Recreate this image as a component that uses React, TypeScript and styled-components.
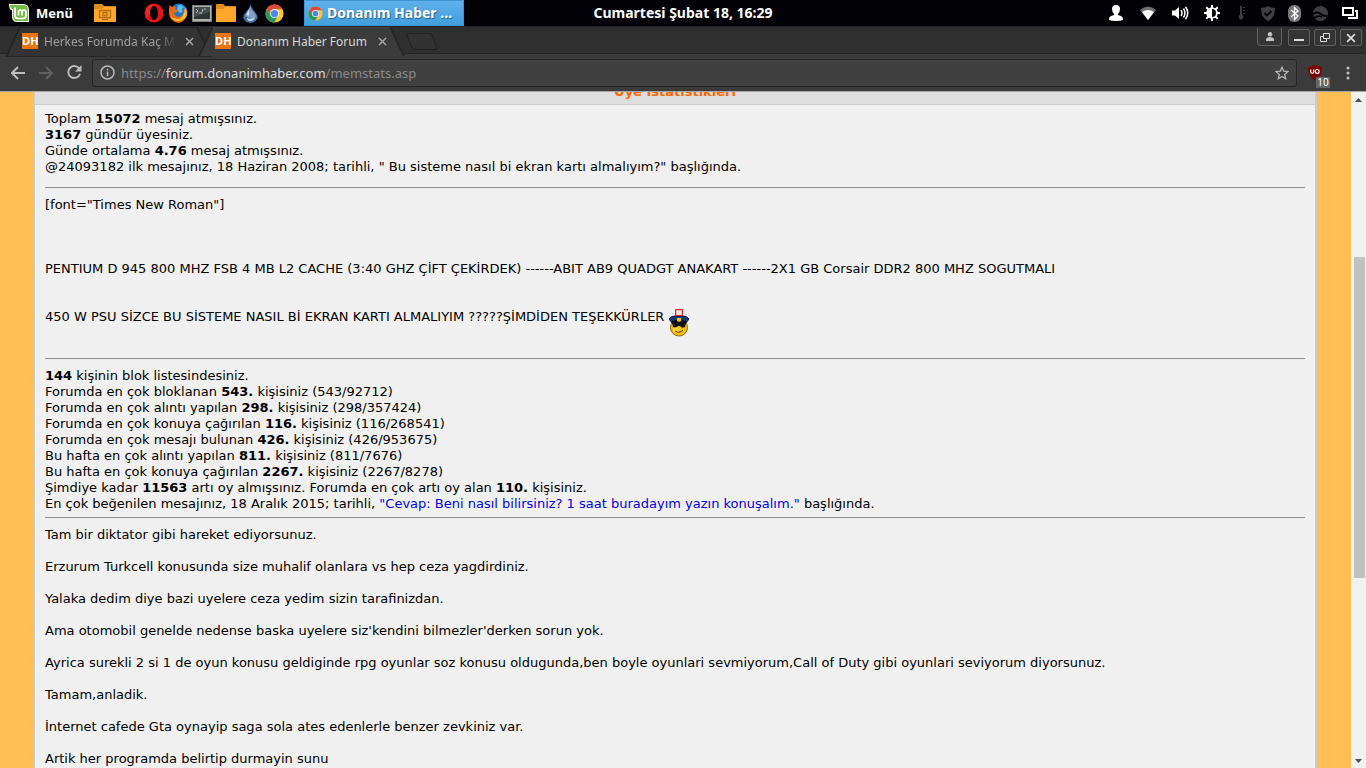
import React from "react";
import styled, { createGlobalStyle } from "styled-components";

const GlobalStyle = createGlobalStyle`
  * { box-sizing: border-box; }
  body { margin: 0; background: #f0f0f0; overflow: hidden; }
  button { padding: 0; border: 0; background: none; color: inherit; font: inherit; cursor: pointer; }
  svg { display: block; flex: none; }
`;

const Screen = styled.div`
  display: flex;
  flex-direction: column;
  height: 100vh;
  overflow: hidden;
`;

/* Desktop panel */
const Panel = styled.header`
  display: grid;
  grid-template-columns: 1fr auto 1fr;
  align-items: center;
  height: 26px;
  flex: none;
  background: #020207;
  color: #fff;
  font: bold 13px/26px "Noto Sans", sans-serif;
`;

const PanelLeft = styled.div`
  display: flex;
  align-items: center;
  height: 26px;
`;

const MenuButton = styled.button`
  display: flex;
  align-items: center;
  gap: 7px;
  width: 94px;
  padding-left: 9px;
  height: 26px;
`;

const Clock = styled.time`
  font-size: 14px;
`;

const Launchers = styled.div`
  display: flex;
  align-items: center;
  gap: 4px;
  margin-left: 30px;
`;

const Launcher = styled.button`
  display: grid;
  place-items: center;
  width: 20px;
  height: 26px;
`;

const TaskButton = styled.button`
  display: flex;
  align-items: center;
  gap: 4px;
  width: 160px;
  height: 26px;
  padding-left: 3px;
  margin-left: 20px;
  background: linear-gradient(#60b0ec, #429fdd);
  border: 1px solid #3c94d2;
  font-size: 14px;
  text-shadow: 1px 1px 1px #2a5f8c;
`;

const Tray = styled.div`
  display: flex;
  justify-content: flex-end;
  align-items: center;
  gap: 8px;
  padding-right: 5px;
`;

const TrayButton = styled.button<{ $dim?: boolean }>`
  display: grid;
  place-items: center;
  width: 22px;
  height: 26px;
  opacity: ${(p) => (p.$dim ? 0.24 : 1)};
`;

const TrayGroup = styled.div<{ $gap: number }>`
  display: flex;
  gap: ${(p) => p.$gap}px;
`;

/* Browser chrome */
const TabStrip = styled.div`
  display: flex;
  height: 28px;
  flex: none;
  padding-left: 12px;
  background: #2f2f2f;
  border-top: 1px solid #232323;
  box-shadow: inset 0 -1px #242424;
  color: #d6d6d6;
  font: 12px/27px "Noto Sans", sans-serif;
`;

const Tab = styled.div<{ $active?: boolean }>`
  position: relative;
  display: flex;
  align-items: center;
  width: 193px;
  height: 28px;
  padding: 0 9px 0 10px;
  color: ${(p) => (p.$active ? "#d8d8d8" : "#a0a0a0")};
  z-index: ${(p) => (p.$active ? 1 : 0)};
  &::before,
  &::after {
    content: "";
    position: absolute;
    z-index: -1;
    top: 0;
    height: 28px;
    width: 52%;
    background: ${(p) => (p.$active ? "#3b3b3b" : "#333333")};
    border-top: 1px solid ${(p) => (p.$active ? "#464646" : "#252525")};
    border-bottom: ${(p) => (p.$active ? "0" : "1px solid #242424")};
  }
  &::before {
    left: 0;
    border-left: 2px solid #242424;
    transform: skewX(-25deg);
  }
  &::after {
    right: 0;
    border-right: 2px solid #242424;
    transform: skewX(25deg);
  }
`;

const Favicon = styled.span`
  width: 16px;
  height: 16px;
  flex: none;
  background: #e8750f;
  color: #fff;
  font: bold 11px/16px "Open Sans", sans-serif;
  text-align: center;
`;

const TabTitle = styled.span<{ $faded?: boolean }>`
  flex: 1;
  margin-left: 6px;
  overflow: hidden;
  white-space: nowrap;
  mask-image: ${(p) => (p.$faded ? "linear-gradient(to right, #000 85%, transparent)" : "none")};
`;

const TabClose = styled.button`
  display: grid;
  place-items: center;
  width: 14px;
  height: 16px;
  margin-left: 5px;
  color: #a6a6a6;
`;

const NewTab = styled.button`
  width: 26px;
  height: 17px;
  margin: 6px 0 0 11px;
  border: 1px solid #202020;
  border-radius: 3px;
  background: #323232;
  transform: skewX(22deg);
`;

const WindowButtons = styled.div`
  display: flex;
  gap: 4px;
  margin-left: auto;
  padding-right: 4px;
`;

const WindowButton = styled.button<{ $profile?: boolean }>`
  display: grid;
  place-items: center;
  width: ${(p) => (p.$profile ? 25 : 22)}px;
  height: ${(p) => (p.$profile ? 18 : 17)}px;
  margin-top: ${(p) => (p.$profile ? 1 : 2)}px;
  margin-right: ${(p) => (p.$profile ? 2 : 0)}px;
  border: 1px solid #626262;
  border-top-width: ${(p) => (p.$profile ? 0 : 1)}px;
  border-radius: ${(p) => (p.$profile ? "0 0 4px 4px" : "2px")};
  background: #353535;
  color: #dedede;
`;

const Toolbar = styled.nav`
  display: flex;
  align-items: center;
  height: 38px;
  flex: none;
  padding: 0 8px;
  background: #3b3b3b;
  border-bottom: 1px solid #a8a8a8;
  color: #bdbdbd;
`;

const NavButtons = styled.div`
  display: flex;
  gap: 8px;
  margin-right: 8px;
`;

const NavButton = styled.button<{ $off?: boolean }>`
  display: grid;
  place-items: center;
  width: 20px;
  height: 20px;
  color: ${(p) => (p.$off ? "#606060" : "#bdbdbd")};
`;

const AddressBar = styled.div`
  display: flex;
  align-items: center;
  flex: 1;
  height: 28px;
  padding: 0 7px;
  gap: 6px;
  background: #404040;
  border: 1px solid #242424;
  border-radius: 3px;
  font: 13px/26px "Noto Sans", sans-serif;
  color: #8a8a8a;
`;

const Address = styled.a`
  flex: 1;
  color: inherit;
  text-decoration: none;
  b { font-weight: normal; color: #dcdcdc; }
`;

const Extension = styled.button`
  position: relative;
  width: 22px;
  height: 22px;
  margin: 0 10px 0 9px;
  padding: 1px 2px;
`;

const ExtensionBadge = styled.span`
  position: absolute;
  right: -2px;
  bottom: -4px;
  width: 14px;
  height: 11px;
  background: #666;
  color: #fff;
  font: 10px/11px "Noto Sans", sans-serif;
  text-align: center;
`;

/* Web page */
const Viewport = styled.div`
  display: flex;
  flex: 1;
  min-height: 0;
`;

const Backdrop = styled.div`
  flex: 1;
  min-width: 0;
  padding: 0 34px;
  background: #ffbf55;
  overflow: hidden;
`;

const Content = styled.main`
  min-height: 100%;
  background: #f0f0f0;
  border: solid #cccccc;
  border-width: 0 2px 0 1px;
  color: #000;
  font: 13px/16px Verdana, "DejaVu Sans", sans-serif;
`;

const TitleBar = styled.div`
  display: flex;
  align-items: flex-end;
  justify-content: center;
  height: 13px;
  overflow: hidden;
  background: #dedede;
  border-bottom: 1px solid #cccccc;
  padding-bottom: 4px;
`;

const Title = styled.h1`
  margin: 0;
  color: #ff6600;
  font: bold 13px/16px Verdana, "DejaVu Sans", sans-serif;
`;

const Body = styled.div`
  padding: 6px 10px 0;
`;

const Lines = styled.div`
  white-space: nowrap;
`;

const Line = styled.p<{ $gap?: number }>`
  margin: 0 0 ${(p) => p.$gap ?? 0}px;
`;

const Specs = styled(Line)`
  display: flex;
  gap: 5px;
  align-items: flex-start;
`;

const Rule = styled.hr<{ $above: number }>`
  height: 2px;
  margin: ${(p) => p.$above}px 0 8px;
  border: 0;
  border-top: 1px solid #949494;
  border-bottom: 1px solid #ececec;
`;

const TopicLink = styled.a`
  color: #0000ee;
  text-decoration: none;
`;

const Scrollbar = styled.div`
  display: flex;
  flex-direction: column;
  align-items: center;
  width: 15px;
  flex: none;
  padding: 6px 0 5px;
  background: #f1f1f1;
`;

const ScrollSpace = styled.div<{ $grow: number }>`
  flex: ${(p) => p.$grow} 1 0;
`;

const ScrollThumb = styled.div`
  flex: 320 1 0;
  width: 11px;
  margin-left: 1px;
  background: #c1c1c1;
`;

const MintLogo = () => (
  <svg width="20" height="18" viewBox="0 0 20 18">
    <path d="M0 0h14q6 0 6 6v12H8q-5 0-5-6V6H2Q0 5 0 0Z" fill="#f5f9ef" />
    <path d="M1 1h13q5 0 5 5v11H8q-4 0-4-5V5Q1 5 1 1Z" fill="#79b94b" />
    <path d="M6 3.500v8q0 3 3 3h5q3 0 3-3V8q0-2-2-2t-2 2v3.500M13 8q0-2-1.750-2T9.500 8v3.500" fill="none" stroke="#fff" strokeWidth="1.700" />
  </svg>
);

const Folder = ({ desktop }: { desktop?: boolean }) => (
  <svg width={desktop ? 22 : 20} height="18" viewBox="0 0 22 18" preserveAspectRatio="none">
    <path d="M0 1q0-1 1-1h7l2 2h11q1 0 1 1v14q0 1-1 1H1q-1 0-1-1Z" fill="#e08d1e" />
    <path d="M0 5h8l2-2h12v14q0 1-1 1H1q-1 0-1-1Z" fill="#ffa62b" />
    {desktop && <path d="M5.500 6.500h11v7h-11ZM8 15.500h6M9 8.500h4v3H9Z" fill="none" stroke="#b56f16" strokeWidth="1.300" />}
  </svg>
);

const Opera = () => (
  <svg width="20" height="20" viewBox="0 0 20 20">
    <ellipse cx="10" cy="10" rx="9.500" ry="9.500" fill="#df1518" />
    <path d="M2 6Q5 1 10 1l-3 8-5 6Z" fill="#ff3535" opacity=".5" />
    <ellipse cx="10" cy="10" rx="4" ry="7" fill="#050508" />
  </svg>
);

const Firefox = () => (
  <svg width="20" height="20" viewBox="0 0 20 20">
    <circle cx="11" cy="9" r="8.500" fill="#2474c5" />
    <path d="M10 2q3-1 6 2l-2 2 1 3-3 1-3-3Z" fill="#5dbaf0" />
    <path d="M1 5l1-3 2 2q3-1 4 0L7 6l3 1-1 2-3 1q1 4 5 4 4-1 5-5l1-5q3 4 2 8-2 7-9 8Q2 18 1 11Z" fill="#e96a12" />
    <path d="M17 5q3 5 1 9-3 4-8 4-5 0-8-5 4 3 8 3 6-1 7-11Z" fill="#ffbf32" />
  </svg>
);

const Terminal = () => (
  <svg width="20" height="17" viewBox="0 0 20 17">
    <rect x=".5" y=".5" width="19" height="16" fill="#adb0ac" stroke="#797c79" />
    <rect x="2" y="2" width="16" height="12" fill="#2c3434" />
    <path d="M4 4l2 2-2 2M7 8h3M11 4l-1 3M12 4h2" stroke="#c3cbcb" fill="none" />
    <path d="M2 2h16v5L2 12Z" fill="#899999" opacity=".25" />
  </svg>
);

const Drop = () => (
  <svg width="15" height="19" viewBox="0 0 15 19">
    <path d="M7.500 0Q8 3 12 8t2 7q-2 4-6.500 4T1 15q-2-3 2-7t4.500-8Z" fill="#49719f" />
    <path d="M7.500 2.500q.5 3 3.500 6t1 5q-1 2-4.500 1T3 12q-1-1 1-4t3.500-5.500Z" fill="#7f9fc4" />
    <path d="M6 6q1 4-1 6-2-1-1-3Z" fill="#d3e4f4" />
    <path d="M4 14q4 2.500 8-1-1 4-4.500 4T4 14Z" fill="#c6def1" />
  </svg>
);

const Chrome = ({ size }: { size: number }) => (
  <svg width={size} height={size} viewBox="0 0 20 20">
    <circle cx="10" cy="10" r="9.500" fill="#f9c63a" />
    <path d="M1.800 5.200A9.500 9.500 0 0 1 18.300 5.500H10L5.800 12Z" fill="#dc4b3e" />
    <path d="M1.800 5.200A9.500 9.500 0 0 0 9.500 19.500l4.500-7.200-4 2.200-4.200-2.500Z" fill="#29995b" />
    <circle cx="10" cy="10" r="4.700" fill="#fff" />
    <circle cx="10" cy="10" r="3.800" fill="#4b85e8" />
  </svg>
);

const UserIcon = () => (
  <svg width="14" height="16" viewBox="0 0 14 16" fill="#fff">
    <path d="M7 0q4 0 4 4 0 3-2 5v1q5 1 5 4v1q-2 1-7 1t-7-1v-1q0-3 5-4V9Q3 7 3 4q0-4 4-4Z" />
  </svg>
);
const WifiIcon = () => (
  <svg width="16" height="14" viewBox="0 0 16 14">
    <path d="M0 4q8-7 16 0L8 14Z" fill="#6f6f72" />
    <path d="M2 6q6-4 12 0l-6 8Z" fill="#fff" />
  </svg>
);
const SoundIcon = () => (
  <svg width="17" height="14" viewBox="0 0 17 14" fill="none" stroke="#fff" strokeWidth="1.500">
    <path d="M0 4.500h3L7 1v12L3 9.500H0Z" fill="#fff" stroke="none" />
    <path d="M9 4q2 3 0 6M11.500 2.500q3 4.500 0 9M13.500 .8q4.500 6.200 0 12.400" />
  </svg>
);
const BrightnessIcon = () => (
  <svg width="16" height="16" viewBox="0 0 16 16">
    <path d="M8 0v16M0 8h16M2.300 2.300l11.400 11.400M13.700 2.300L2.300 13.700" stroke="#fff" strokeWidth="2" />
    <circle cx="8" cy="8" r="5.800" fill="#fff" />
    <path d="M8 4a4 4 0 0 1 0 8Z" fill="#020207" />
  </svg>
);
const ThermometerIcon = () => (
  <svg width="8" height="14" viewBox="0 0 8 14" fill="#fff">
    <path d="M2 0h2v9q2 1 1 3-2 3-4 0-1-2 1-3ZM5 1h2v1H5ZM5 4h2v1H5ZM5 7h2v1H5Z" />
  </svg>
);
const ShieldIcon = () => (
  <svg width="14" height="15" viewBox="0 0 14 15">
    <path d="M7 0q3 2 7 2 0 10-7 13Q0 12 0 2q4 0 7-2Z" fill="#fff" />
    <path d="M3.500 7L6 9.500 10.500 5" fill="none" stroke="#020207" strokeWidth="1.800" />
  </svg>
);
const BluetoothIcon = () => (
  <svg width="13" height="17" viewBox="0 0 13 17">
    <rect width="13" height="17" rx="6" fill="#77777a" />
    <path d="M3 5l7 6-3.500 3.500v-12L10 6l-7 6" fill="none" stroke="#fff" strokeWidth="1.300" />
  </svg>
);
const OrbIcon = () => (
  <svg width="15" height="15" viewBox="0 0 15 15">
    <circle cx="7.500" cy="7.500" r="7.500" fill="#fff" />
    <path d="M0 8q4-3 8 0t7 2M1 12q4-3 8-1" fill="none" stroke="#020207" strokeWidth="1.800" />
  </svg>
);
const WindowsIcon = () => (
  <svg width="16" height="12" viewBox="0 0 16 12" fill="none" stroke="#fff" strokeWidth="2">
    <path d="M1 1h10v7H1ZM13 4h2v7H6" />
  </svg>
);

const CloseIcon = ({ size }: { size: number }) => (
  <svg width={size} height={size} viewBox="0 0 9 9" stroke="currentColor" strokeWidth="1.500">
    <path d="M1 1l7 7M8 1L1 8" />
  </svg>
);
const ProfileIcon = () => (
  <svg width="10" height="9" viewBox="0 0 10 9" fill="#c4c4c4">
    <circle cx="5" cy="2.200" r="2.200" />
    <path d="M1 9V7q1-2 4-2t4 2v2Z" />
  </svg>
);
const MinimizeIcon = () => (
  <svg width="10" height="9" viewBox="0 0 10 9" fill="currentColor"><path d="M0 6h10v2H0Z" /></svg>
);
const RestoreIcon = () => (
  <svg width="10" height="9" viewBox="0 0 10 9" fill="none" stroke="currentColor">
    <path d="M3.500 .5h6v5h-6ZM3.500 3.500h-3v5h6v-3" />
  </svg>
);

const ArrowIcon = ({ flip }: { flip?: boolean }) => (
  <svg width="14" height="14" viewBox="0 0 14 14" fill="none" stroke="currentColor" strokeWidth="2">
    <path d={flip ? "M0 7h13M7 1l6 6-6 6" : "M14 7H1M7 1L1 7l6 6"} />
  </svg>
);
const ReloadIcon = () => (
  <svg width="15" height="15" viewBox="0 0 15 15">
    <path d="M12.500 4A6 6 0 1 0 13 9" fill="none" stroke="currentColor" strokeWidth="1.900" />
    <path d="M14.500 0v6.500H8Z" fill="currentColor" />
  </svg>
);
const InfoIcon = () => (
  <svg width="15" height="15" viewBox="0 0 15 15" fill="none" stroke="#b8b8b8" strokeWidth="1.500">
    <circle cx="7.500" cy="7.500" r="6.500" />
    <path d="M7.500 6.500V11M7.500 4v1.500" />
  </svg>
);
const StarIcon = () => (
  <svg width="14" height="14" viewBox="0 0 14 14" fill="none" stroke="#b8b8b8" strokeWidth="1.300">
    <path d="M7 1.200l1.700 4 4.300.4-3.300 2.800 1 4.300L7 10.500l-3.700 2.200 1-4.300L1 5.600l4.300-.4Z" />
  </svg>
);
const UblockIcon = () => (
  <svg width="14" height="15" viewBox="0 0 14 15">
    <path d="M7 0q3 2 7 2 0 10-7 13Q0 12 0 2q4 0 7-2Z" fill="#800000" />
    <path d="M2.700 4.500v2.300q0 1.500 1.500 1.500t1.500-1.500V4.500" fill="none" stroke="#fff" strokeWidth="1.200" />
    <circle cx="9.200" cy="6.400" r="1.900" fill="none" stroke="#fff" strokeWidth="1.200" />
  </svg>
);
const MoreIcon = () => (
  <svg width="4" height="14" viewBox="0 0 4 14" fill="#bdbdbd">
    <circle cx="2" cy="2" r="1.600" /><circle cx="2" cy="7" r="1.600" /><circle cx="2" cy="12" r="1.600" />
  </svg>
);
const ScrollArrow = ({ down }: { down?: boolean }) => (
  <svg width="7" height="4" viewBox="0 0 7 4" fill="#505050">
    <path d={down ? "M0 0h7L3.500 4Z" : "M0 4h7L3.500 0Z"} />
  </svg>
);
const PoliceSmiley = () => (
  <svg width="20" height="28" viewBox="0 0 20 28">
    <circle cx="10" cy="18.500" r="8.500" fill="#f2bd16" stroke="#956500" />
    <path d="M3 14h14l-1 4q-3 2-5-1H9q-2 3-5 1Z" fill="#151515" />
    <circle cx="7" cy="21" r="3" fill="#ffe45a" opacity=".6" />
    <path d="M6 22q4 3 8-1" fill="none" stroke="#5b3c00" />
    <path d="M0 10Q2 7 6 7h8q4 0 6 3l-3 4q-7-2-14 0Z" fill="#183b70" stroke="#071a38" />
    <path d="M3 12q7-2 14 0v3q-7-2-14 0Z" fill="#080c15" />
    <path d="M8 9h4v3l-2 1-2-1Z" fill="#f5c51c" />
    <path d="M6.500 .5h7v6h-7Z" fill="#ffb8b8" stroke="#e9181d" />
    <path d="M8 2h4v4H8Z" fill="#ffe6e6" />
  </svg>
);

const rankings: [string, string, string][] = [
  ["", "144", " kişinin blok listesindesiniz."],
  ["Forumda en çok bloklanan ", "543.", " kişisiniz (543/92712)"],
  ["Forumda en çok alıntı yapılan ", "298.", " kişisiniz (298/357424)"],
  ["Forumda en çok konuya çağırılan ", "116.", " kişisiniz (116/268541)"],
  ["Forumda en çok mesajı bulunan ", "426.", " kişisiniz (426/953675)"],
  ["Bu hafta en çok alıntı yapılan ", "811.", " kişisiniz (811/7676)"],
  ["Bu hafta en çok konuya çağırılan ", "2267.", " kişisiniz (2267/8278)"],
];

const remarks = [
  "Tam bir diktator gibi hareket ediyorsunuz.",
  "Erzurum Turkcell konusunda size muhalif olanlara vs hep ceza yagdirdiniz.",
  "Yalaka dedim diye bazi uyelere ceza yedim sizin tarafinizdan.",
  "Ama otomobil genelde nedense baska uyelere siz'kendini bilmezler'derken sorun yok.",
  "Ayrica surekli 2 si 1 de oyun konusu geldiginde rpg oyunlar soz konusu oldugunda,ben boyle oyunlari sevmiyorum,Call of Duty gibi oyunlari seviyorum diyorsunuz.",
  "Tamam,anladik.",
  "İnternet cafede Gta oynayip saga sola ates edenlerle benzer zevkiniz var.",
  "Artik her programda belirtip durmayin sunu",
];

export default function App() {
  return (
    <Screen>
      <GlobalStyle />
      <Panel>
        <PanelLeft>
          <MenuButton><MintLogo />Menü</MenuButton>
          <Launcher aria-label="Masaüstü"><Folder desktop /></Launcher>
          <Launchers>
            <Launcher aria-label="Opera"><Opera /></Launcher>
            <Launcher aria-label="Firefox"><Firefox /></Launcher>
            <Launcher aria-label="Terminal"><Terminal /></Launcher>
            <Launcher aria-label="Dosyalar"><Folder /></Launcher>
            <Launcher aria-label="Deluge"><Drop /></Launcher>
            <Launcher aria-label="Chrome"><Chrome size={19} /></Launcher>
          </Launchers>
          <TaskButton><Chrome size={15} />Donanım Haber ...</TaskButton>
        </PanelLeft>
        <Clock>Cumartesi Şubat 18, 16:29</Clock>
        <Tray>
          <TrayGroup $gap={10}>
            <TrayButton aria-label="Kullanıcı"><UserIcon /></TrayButton>
            <TrayButton aria-label="Ağ"><WifiIcon /></TrayButton>
            <TrayButton aria-label="Ses"><SoundIcon /></TrayButton>
            <TrayButton aria-label="Parlaklık"><BrightnessIcon /></TrayButton>
          </TrayGroup>
          <TrayGroup $gap={4}>
            <TrayButton $dim aria-label="Sıcaklık"><ThermometerIcon /></TrayButton>
            <TrayButton $dim aria-label="Güncellemeler"><ShieldIcon /></TrayButton>
            <TrayButton aria-label="Bluetooth"><BluetoothIcon /></TrayButton>
            <TrayButton $dim aria-label="Steam"><OrbIcon /></TrayButton>
          </TrayGroup>
          <TrayButton aria-label="Pencereler"><WindowsIcon /></TrayButton>
        </Tray>
      </Panel>

      <TabStrip>
        <Tab>
          <Favicon>DH</Favicon>
          <TabTitle $faded>Herkes Forumda Kaç Mesaj</TabTitle>
          <TabClose aria-label="Sekmeyi kapat"><CloseIcon size={9} /></TabClose>
        </Tab>
        <Tab $active>
          <Favicon>DH</Favicon>
          <TabTitle>Donanım Haber Forum</TabTitle>
          <TabClose aria-label="Sekmeyi kapat"><CloseIcon size={9} /></TabClose>
        </Tab>
        <NewTab aria-label="Yeni sekme" />
        <WindowButtons>
          <WindowButton $profile aria-label="Profil"><ProfileIcon /></WindowButton>
          <WindowButton aria-label="Küçült"><MinimizeIcon /></WindowButton>
          <WindowButton aria-label="Geri yükle"><RestoreIcon /></WindowButton>
          <WindowButton aria-label="Kapat"><CloseIcon size={10} /></WindowButton>
        </WindowButtons>
      </TabStrip>

      <Toolbar>
        <NavButtons>
          <NavButton aria-label="Geri"><ArrowIcon /></NavButton>
          <NavButton $off aria-label="İleri"><ArrowIcon flip /></NavButton>
          <NavButton aria-label="Yenile"><ReloadIcon /></NavButton>
        </NavButtons>
        <AddressBar>
          <InfoIcon />
          <Address href="#">https://<b>forum.donanimhaber.com</b>/memstats.asp</Address>
          <button aria-label="Yer işareti"><StarIcon /></button>
        </AddressBar>
        <Extension aria-label="uBlock Origin">
          <UblockIcon />
          <ExtensionBadge>10</ExtensionBadge>
        </Extension>
        <NavButton aria-label="Menü"><MoreIcon /></NavButton>
      </Toolbar>

      <Viewport>
        <Backdrop>
          <Content>
            <TitleBar><Title>Üye İstatistikleri</Title></TitleBar>
            <Body>
              <Lines>
                <Line>Toplam <b>15072</b> mesaj atmışsınız.</Line>
                <Line><b>3167</b> gündür üyesiniz.</Line>
                <Line>Günde ortalama <b>4.76</b> mesaj atmışsınız.</Line>
                <Line>@24093182 ilk mesajınız, 18 Haziran 2008; tarihli, " Bu sisteme nasıl bi ekran kartı almalıyım?" başlığında.</Line>
              </Lines>
              <Rule $above={12} />
              <Lines>
                <Line $gap={48}>[font="Times New Roman"]</Line>
                <Line $gap={32}>PENTIUM D 945 800 MHZ FSB 4 MB L2 CACHE (3:40 GHZ ÇİFT ÇEKİRDEK) ------ABIT AB9 QUADGT ANAKART ------2X1 GB Corsair DDR2 800 MHZ SOGUTMALI</Line>
                <Specs>450 W PSU SİZCE BU SİSTEME NASIL Bİ EKRAN KARTI ALMALIYIM ?????ŞİMDİDEN TEŞEKKÜRLER <PoliceSmiley /></Specs>
              </Lines>
              <Rule $above={21} />
              <Lines>
                {rankings.map(([before, rank, after]) => (
                  <Line key={rank}>{before}<b>{rank}</b>{after}</Line>
                ))}
                <Line>Şimdiye kadar <b>11563</b> artı oy almışsınız. Forumda en çok artı oy alan <b>110.</b> kişisiniz.</Line>
                <Line>En çok beğenilen mesajınız, 18 Aralık 2015; tarihli, <TopicLink href="#">"Cevap: Beni nasıl bilirsiniz? 1 saat buradayım yazın konuşalım."</TopicLink> başlığında.</Line>
              </Lines>
              <Rule $above={5} />
              <Lines>
                {remarks.map((remark) => <Line key={remark} $gap={16}>{remark}</Line>)}
              </Lines>
            </Body>
          </Content>
        </Backdrop>
        <Scrollbar>
          <ScrollArrow />
          <ScrollSpace $grow={155} />
          <ScrollThumb />
          <ScrollSpace $grow={181} />
          <ScrollArrow down />
        </Scrollbar>
      </Viewport>
    </Screen>
  );
}
